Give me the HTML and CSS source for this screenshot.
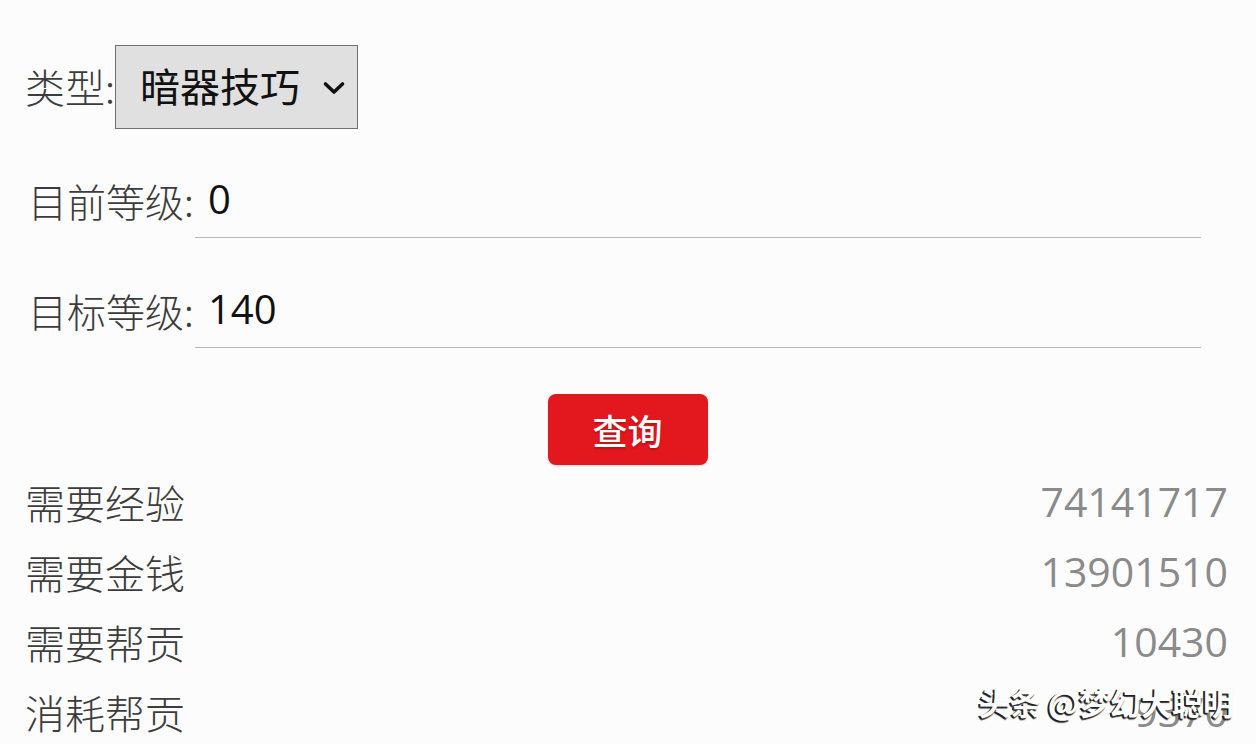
FILE: index.html
```html
<!DOCTYPE html>
<html lang="zh-CN">
<head>
<meta charset="utf-8">
<title>暗器技巧</title>
<link rel="stylesheet" href="styles.css">
</head>
<body>
<div class="page">
  <div class="row-type">
    <span class="label">类型:</span>
    <div class="select">
      <span class="select-text">暗器技巧</span>
      <svg class="chev" width="24" height="16" viewBox="0 0 24 16"><path d="M3.5 4 L12 12 L20.5 4" fill="none" stroke="#111" stroke-width="3.6" stroke-linecap="round" stroke-linejoin="round"/></svg>
    </div>
  </div>
  <div class="field">
    <span class="label lbl-field">目前等级:</span>
    <div class="input"><span class="val">0</span></div>
  </div>
  <div class="field field2">
    <span class="label lbl-field">目标等级:</span>
    <div class="input"><span class="val">140</span></div>
  </div>
  <div class="btn-row"><div class="btn">查询</div></div>
  <div class="results">
    <div class="res"><span class="label">需要经验</span><span class="num">74141717</span></div>
    <div class="res"><span class="label">需要金钱</span><span class="num">13901510</span></div>
    <div class="res"><span class="label">需要帮贡</span><span class="num">10430</span></div>
    <div class="res"><span class="label">消耗帮贡</span><span class="num">9370</span></div>
  </div>
  <div class="watermark">头条 @梦幻大聪明</div>
</div>
</body>
</html>
```
FILE: styles.css
```css
html, body {
  margin: 0;
  padding: 0;
  background: #fcfcfd;
}
.page {
  position: relative;
  width: 1256px;
  height: 744px;
  overflow: hidden;
  padding: 0 28px 0 25px;
  box-sizing: border-box;
  font-family: "Noto Sans CJK SC", "Noto Sans", sans-serif;
  color: #3a3a3a;
}
.label {
  font-size: 40px;
  line-height: 1;
  font-weight: 300;
  color: #3c3c3c;
  white-space: nowrap;
}
.row-type {
  display: flex;
  align-items: center;
  margin-top: 45px;
  height: 84px;
}
.row-type .label {
  margin-top: -2px;
  width: 90px;
}
.select {
  display: flex;
  align-items: center;
  box-sizing: border-box;
  width: 243px;
  height: 84px;
  background: #e0e0e0;
  border: 1px solid #707070;
  padding-left: 24px;
}
.select-text {
  font-size: 40px;
  color: #111;
  line-height: 1;
  margin-top: -4px;
}
.chev {
  margin-left: 22px;
  margin-top: 2px;
}
.field {
  display: flex;
  align-items: center;
  margin-top: 48px;
  height: 61px;
}
.field2 {
  margin-top: 49px;
}
.lbl-field {
  font-size: 39px;
  padding-left: 3px;
  width: 167px;
  flex-shrink: 0;
  margin-top: -14px;
}
.input {
  flex: 1;
  height: 61px;
  box-sizing: border-box;
  border-bottom: 1px solid #b8b8b8;
  margin-right: 27px;
  display: flex;
  align-items: center;
  padding-left: 13px;
}
.val {
  font-family: "Open Sans", "Noto Sans", sans-serif;
  font-size: 40px;
  color: #111;
  line-height: 1;
  margin-top: -16px;
}
.btn-row {
  display: flex;
  justify-content: center;
  margin-top: 46px;
  padding-left: 2px;
}
.btn {
  width: 160px;
  height: 71px;
  background: #e3171e;
  border-radius: 8px;
  color: #fff;
  font-size: 35px;
  font-weight: 500;
  display: flex;
  align-items: center;
  justify-content: center;
  text-shadow: 0 2px 2px rgba(0,0,0,0.2);
  box-shadow: 0 1px 2px rgba(0,0,0,0.15);
}
.results {
  margin-top: 2px;
}
.res {
  display: flex;
  justify-content: space-between;
  align-items: center;
  height: 70px;
}
.num {
  font-family: "Open Sans", "Noto Sans", sans-serif;
  font-size: 41px;
  color: #8a8a8a;
  line-height: 1;
  margin-top: -2px;
}
.watermark {
  position: absolute;
  right: 22px;
  bottom: 20px;
  font-size: 31px;
  font-weight: 700;
  color: #ffffff;
  text-shadow: -2px 1px 0 #222, -1px 2px 1px #333;
}
```
